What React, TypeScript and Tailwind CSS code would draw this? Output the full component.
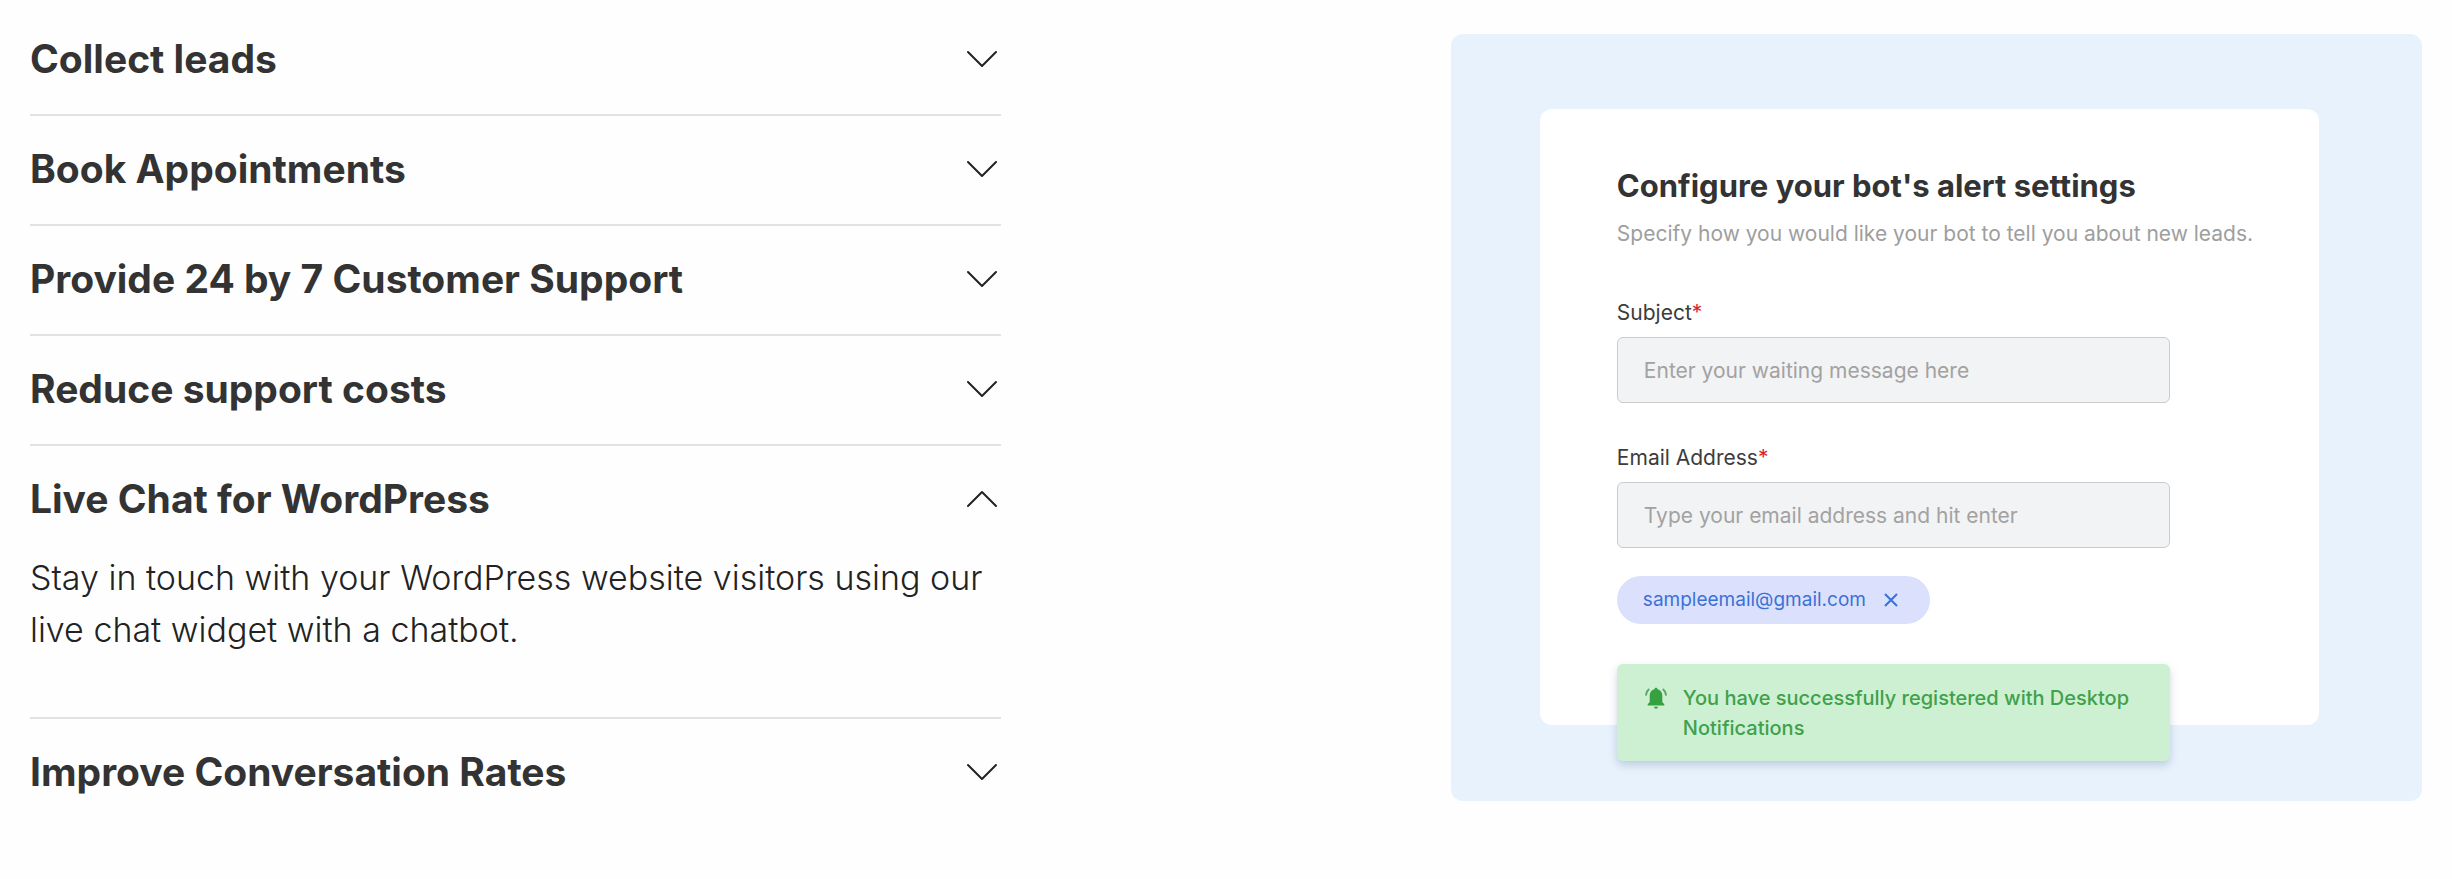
import { useState } from "react"

const items = [
  { title: "Collect leads" },
  { title: "Book Appointments" },
  { title: "Provide 24 by 7 Customer Support" },
  { title: "Reduce support costs" },
  {
    title: "Live Chat for WordPress",
    body: "Stay in touch with your WordPress website visitors using our live chat widget with a chatbot.",
  },
  { title: "Improve Conversation Rates" },
]

function Chevron({ open }: { open: boolean }) {
  return (
    <svg
      className="mr-1 shrink-0"
      width="30"
      height="18"
      viewBox="0 0 30 18"
      fill="none"
      stroke="#222"
      strokeWidth="2"
      strokeLinecap="round"
      strokeLinejoin="round"
      aria-hidden="true"
    >
      <path d={open ? "M1 16 15 2l14 14" : "M1 2l14 14L29 2"} />
    </svg>
  )
}

function BellIcon() {
  return (
    <svg
      className="mt-1 shrink-0"
      width="22"
      height="22"
      viewBox="0 0 22 22"
      fill="none"
      aria-hidden="true"
    >
      <path
        d="M11 .8c.9 0 1.500.6 1.500 1.400C15.500 3 17.300 5.300 17.300 8.300V15l2 2.200V18.500H2.700v-1.300L4.700 15V8.300c0-3 1.800-5.300 4.800-6.100C9.500 1.400 10.100.8 11 .8Z"
        fill="#37a040"
      />
      <path d="M9 19.800h4a2 2 0 0 1-4 0Z" fill="#37a040" />
      <path
        d="M4.200 2C2.200 3.600 1.100 5.800.9 8.600M17.800 2c2 1.600 3.100 3.800 3.300 6.600"
        stroke="#5aa663"
        strokeWidth="1.700"
      />
    </svg>
  )
}

function Field({
  id,
  label,
  type,
  placeholder,
}: {
  id: string
  label: string
  type: string
  placeholder: string
}) {
  return (
    <div className="flex flex-col gap-[9px]">
      <label htmlFor={id} className="text-[21px] leading-[30px] text-[#3c3c3c]">
        {label}
        <span className="text-[#e0202c]">*</span>
      </label>
      <input
        id={id}
        type={type}
        placeholder={placeholder}
        className="h-[66px] w-full rounded-md border border-[#cbcbcb] bg-[#f2f3f4] px-[26px] text-[21px] text-[#3c3c3c] placeholder:text-[#a2a2a2]"
      />
    </div>
  )
}

export default function App() {
  const [openIndex, setOpenIndex] = useState(4)

  return (
    <main className="flex items-start justify-between bg-[#fefefe] px-[30px] pb-[78px] font-['Inter',sans-serif]">
      {/* Accordion */}
      <div className="w-[40.6%] pt-[6px]">
        {items.map((item, i) => {
          const open = i === openIndex
          return (
            <section
              key={item.title}
              className="border-b-2 border-[#e2e2e2] pb-0.5 last:border-b-0"
            >
              <h2>
                <button
                  type="button"
                  aria-expanded={open}
                  onClick={() => setOpenIndex(open ? -1 : i)}
                  className="flex h-[106px] w-full items-center justify-between text-left text-[39px] font-bold text-[#333]"
                >
                  {item.title}
                  <Chevron open={open} />
                </button>
              </h2>
              {open && item.body && (
                <p className="pb-[59px] text-[34px] leading-[52px] font-light text-[#222]">
                  {item.body}
                </p>
              )}
            </section>
          )
        })}
      </div>

      {/* Alert settings preview */}
      <div className="mt-[34px] w-[40.6%] rounded-xl bg-[#e8f2fd] pt-[75px] pr-[103px] pb-[76px] pl-[89px]">
        <div className="rounded-xl bg-white pt-[59px] pr-[60px] pl-[77px]">
          <h3 className="text-[31px] leading-[36px] font-bold text-[#333]">
            Configure your bot's alert settings
          </h3>
          <p className="mt-[15px] text-[21px] leading-[30px] text-[#9e9e9e]">
            Specify how you would like your bot to tell you about new leads.
          </p>
          <form
            className="mt-[49px] flex max-w-[553px] flex-col items-stretch"
            onSubmit={(e) => e.preventDefault()}
          >
            <div className="flex flex-col gap-10">
              <Field
                id="subject"
                label="Subject"
                type="text"
                placeholder="Enter your waiting message here"
              />
              <Field
                id="email"
                label="Email Address"
                type="email"
                placeholder="Type your email address and hit enter"
              />
            </div>
            <div className="mt-7 flex h-12 items-center gap-[18px] self-start rounded-full bg-[#dbe1fd] pr-8 pl-[26px] text-[19px] text-[#3b71d6]">
              sampleemail@gmail.com
              <button type="button" aria-label="Remove sampleemail@gmail.com">
                <svg
                  width="14"
                  height="14"
                  viewBox="0 0 14 14"
                  stroke="currentColor"
                  strokeWidth="2"
                  aria-hidden="true"
                >
                  <path d="M1 1l12 12M13 1 1 13" />
                </svg>
              </button>
            </div>
            <div
              role="status"
              className="mt-10 -mb-9 flex gap-4 rounded-md bg-[#cdf0d2] pt-[19px] pr-5 pb-[18px] pl-7 text-[20px] leading-[30px] font-medium text-[#40a14b] shadow-[0_4px_8px_rgba(60,90,130,0.25)]"
            >
              <BellIcon />
              <p>
                You have successfully registered with Desktop Notifications
              </p>
            </div>
          </form>
        </div>
      </div>
    </main>
  )
}
